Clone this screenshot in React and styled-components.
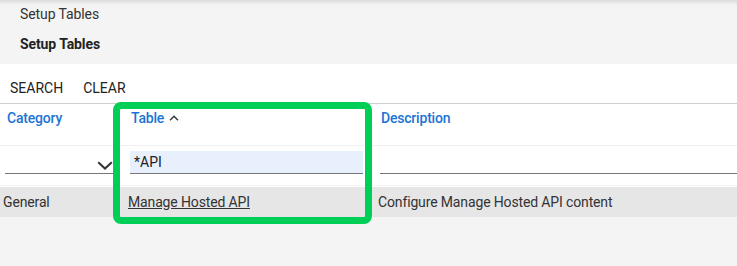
import React from "react";
import styled, { createGlobalStyle } from "styled-components";

const GlobalStyle = createGlobalStyle`
  html, body {
    margin: 0;
    padding: 0;
    background: #f4f4f4;
    font-family: Roboto, "Liberation Sans", Arial, sans-serif;
    color: #333;
  }
`;

const columns = [
  { key: "category", label: "Category" },
  { key: "table", label: "Table", sorted: true },
  { key: "description", label: "Description" },
];

const rows = [
  {
    id: 1,
    category: "General",
    table: "Manage Hosted API",
    description: "Configure Manage Hosted API content",
  },
];

function App() {
  return (
    <>
      <GlobalStyle />
      <Page>
        <Header>
          <Crumb>Setup Tables</Crumb>
          <Title>Setup Tables</Title>
        </Header>
        <Toolbar>
          <ToolButton>SEARCH</ToolButton>
          <ToolButton>CLEAR</ToolButton>
        </Toolbar>
        <Grid>
          <HeadRow>
            {columns.map((col) => (
              <HeadCell key={col.key}>
                {col.label}
                {col.sorted && (
                  <SortIcon viewBox="0 0 10 6">
                    <path d="M1 5.2 L5 1.2 L9 5.2" />
                  </SortIcon>
                )}
              </HeadCell>
            ))}
          </HeadRow>
          <FilterRow>
            <FilterCell $first>
              <Select>
                <Chevron viewBox="0 0 16 9">
                  <path d="M1.2 1.2 L8 7.6 L14.8 1.2" />
                </Chevron>
              </Select>
            </FilterCell>
            <FilterCell>
              <TextInput $filled defaultValue="*API" />
            </FilterCell>
            <FilterCell $last>
              <TextInput defaultValue="" />
            </FilterCell>
          </FilterRow>
          {rows.map((row) => (
            <DataRow key={row.id}>
              <DataCell>{row.category}</DataCell>
              <DataCell>
                <RowLink href="#">{row.table}</RowLink>
              </DataCell>
              <DataCell>{row.description}</DataCell>
            </DataRow>
          ))}
        </Grid>
        <Highlight />
      </Page>
    </>
  );
}

export default App;

// Styled Components

const Page = styled.div`
  position: relative;
  width: 737px;
  height: 266px;
  overflow: hidden;
  background: #f4f4f4;
`;

const Header = styled.div`
  height: 64px;
  box-sizing: border-box;
  padding: 5px 20px 0;
  background: #f4f4f4;
  box-shadow: inset 0 5px 4px -3px rgba(0, 0, 0, 0.12);
  display: flex;
  flex-direction: column;
  gap: 12px;
`;

const Crumb = styled.div`
  font-size: 14px;
  line-height: 18px;
  letter-spacing: -0.1px;
  color: #333;
`;

const Title = styled.div`
  font-size: 14px;
  line-height: 18px;
  font-weight: 700;
  letter-spacing: -0.1px;
  color: #222;
`;

const Toolbar = styled.div`
  height: 40px;
  box-sizing: border-box;
  background: #fff;
  border-bottom: 1px solid #cfcfcf;
  display: flex;
  align-items: center;
  padding: 8px 0 0 10px;
  gap: 20px;
`;

const ToolButton = styled.button`
  border: none;
  background: none;
  padding: 0;
  font-family: inherit;
  font-size: 14px;
  font-weight: 400;
  color: #222;
  cursor: pointer;
`;

const Grid = styled.div`
  background: #fff;
`;

const HeadRow = styled.div`
  display: grid;
  grid-template-columns: 124px 250px 1fr;
  height: 41px;
  border-bottom: 1px solid #f0f0f0;
`;

const HeadCell = styled.div`
  display: flex;
  align-items: flex-start;
  gap: 5px;
  padding: 6px 7px 0;
  font-size: 14px;
  font-weight: 500;
  letter-spacing: -0.2px;
  color: #1b74d4;
`;

const SortIcon = styled.svg`
  width: 10px;
  height: 6px;
  margin-top: 5px;
  fill: none;
  stroke: #333;
  stroke-width: 1.4;
`;

const FilterRow = styled.div`
  display: grid;
  grid-template-columns: 124px 250px 1fr;
  height: 40px;
  box-sizing: border-box;
  padding-top: 5px;
  border-bottom: 1px solid #f3f3f3;
`;

const FilterCell = styled.div`
  padding: 0 ${(p) => (p.$last ? "0" : "11px")} 0 ${(p) => (p.$first ? "5px" : "6px")};
`;

const Select = styled.div`
  height: 22px;
  border-bottom: 1px solid #777;
  display: flex;
  justify-content: flex-end;
  align-items: center;
`;

const Chevron = styled.svg`
  width: 16px;
  height: 9px;
  margin-top: 6px;
  fill: none;
  stroke: #333;
  stroke-width: 2;
`;

const TextInput = styled.input`
  display: block;
  width: 100%;
  height: 23px;
  box-sizing: border-box;
  border: none;
  border-bottom: 1px solid #777;
  background: ${(p) => (p.$filled ? "#e8f0fe" : "transparent")};
  padding: 0 4px;
  font-family: inherit;
  font-size: 14px;
  color: #222;
  outline: none;
`;

const DataRow = styled.div`
  display: grid;
  grid-template-columns: 124px 250px 1fr;
  height: 30px;
  margin-top: 1px;
  align-items: center;
  background: #e6e6e6;
`;

const DataCell = styled.div`
  padding-left: 4px;
  font-size: 14px;
  letter-spacing: -0.14px;
  color: #333;
  white-space: nowrap;

  &:first-child {
    padding-left: 3px;
  }
`;

const RowLink = styled.a`
  color: #333;
  text-decoration: underline;
`;

const Highlight = styled.div`
  position: absolute;
  left: 113px;
  top: 102px;
  width: 259px;
  height: 122px;
  box-sizing: border-box;
  border: 7px solid #00cf57;
  border-radius: 8px;
  pointer-events: none;
`;
